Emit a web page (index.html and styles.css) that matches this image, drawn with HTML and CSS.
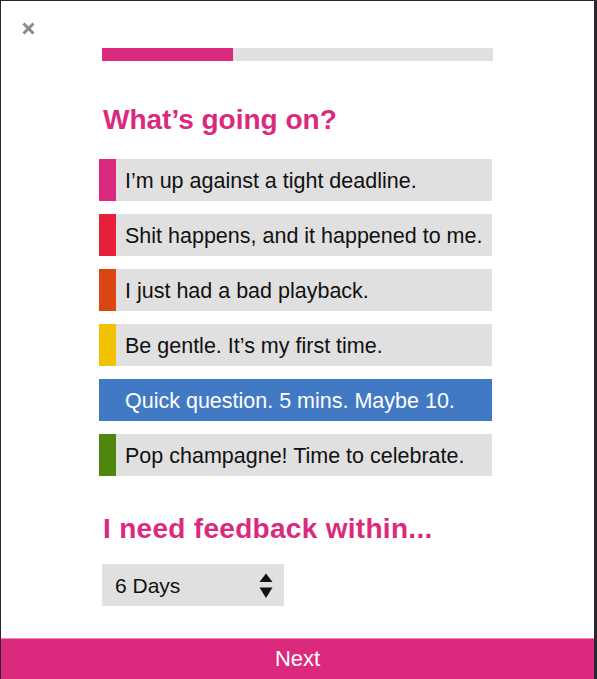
FILE: index.html
```html
<!DOCTYPE html>
<html lang="en">
<head>
<meta charset="utf-8">
<title>What's going on?</title>
<link rel="stylesheet" href="styles.css">
</head>
<body>
<div class="panel">
  <button class="close" aria-label="Close">
    <svg width="13" height="13" viewBox="0 0 13 13"><path d="M1.5 1.5 L11.5 11.5 M11.5 1.5 L1.5 11.5" stroke="#8a8a8a" stroke-width="3" fill="none"/></svg>
  </button>
  <div class="progress"><div class="progress-fill"></div></div>
  <h1 class="heading first">What’s going on?</h1>
  <ul class="options">
    <li class="option"><span class="swatch pink"></span><span class="label">I’m up against a tight deadline.</span></li>
    <li class="option"><span class="swatch red"></span><span class="label">Shit happens, and it happened to me.</span></li>
    <li class="option"><span class="swatch orange"></span><span class="label">I just had a bad playback.</span></li>
    <li class="option"><span class="swatch yellow"></span><span class="label">Be gentle. It’s my first time.</span></li>
    <li class="option selected"><span class="swatch blue"></span><span class="label">Quick question. 5 mins. Maybe 10.</span></li>
    <li class="option"><span class="swatch green"></span><span class="label">Pop champagne! Time to celebrate.</span></li>
  </ul>
  <h2 class="heading second">I need feedback within...</h2>
  <div class="select">
    <span class="select-value">6 Days</span>
    <svg class="select-arrows" width="14" height="26" viewBox="0 0 14 26"><path d="M7 0.5 L13.5 9 L0.5 9 Z" fill="#111"/><path d="M0.5 14.5 L13.5 14.5 L7 25 Z" fill="#111"/></svg>
  </div>
  <button class="next">Next</button>
</div>
</body>
</html>
```

FILE: styles.css
```css
html, body {
  margin: 0;
  padding: 0;
}
body {
  background: #2c262c;
  width: 597px;
  height: 679px;
  padding: 1px 0 0 1px;
  box-sizing: border-box;
  overflow: hidden;
  font-family: "Liberation Sans", Arial, Helvetica, sans-serif;
}
.panel {
  width: 593px;
  height: 678px;
  background: #ffffff;
  display: flex;
  flex-direction: column;
  align-items: flex-start;
}
.close {
  margin: 21px 0 0 21px;
  width: 13px;
  height: 13px;
  padding: 0;
  border: 0;
  background: none;
  display: block;
  line-height: 0;
}
.progress {
  margin: 13px 0 0 101px;
  width: 391px;
  height: 13px;
  background: #e0e0e0;
  display: flex;
}
.progress-fill {
  width: 131px;
  background: #db2a7e;
}
.heading {
  margin: 0 0 0 102px;
  font-size: 28px;
  line-height: 34px;
  font-weight: bold;
  color: #db2a7e;
}
.heading.first {
  margin-top: 42px;
}
.heading.second {
  margin-top: 36px;
  letter-spacing: 0.3px;
}
.options {
  list-style: none;
  margin: 22px 0 0 98px;
  padding: 0;
  display: flex;
  flex-direction: column;
  gap: 13px;
}
.option {
  width: 393px;
  height: 42px;
  background: #e0e0e0;
  display: flex;
  align-items: stretch;
}
.swatch {
  width: 17px;
  flex: none;
}
.pink { background: #db2a7e; }
.red { background: #e71f3a; }
.orange { background: #da4612; }
.yellow { background: #f2c100; }
.green { background: #4d870d; }
.blue { background: #4279c4; }
.label {
  padding: 2px 0 0 9px;
  font-size: 21.5px;
  line-height: 40px;
  color: #111111;
  white-space: nowrap;
}
.option.selected {
  background: #4279c4;
}
.option.selected .label {
  color: #ffffff;
}
.select {
  margin: 18px 0 0 101px;
  width: 182px;
  height: 42px;
  background: #e0e0e0;
  display: flex;
  align-items: center;
  justify-content: space-between;
  padding: 0 11px 0 13px;
  box-sizing: border-box;
}
.select-value {
  font-size: 21px;
  line-height: 42px;
  padding-top: 1px;
  color: #111111;
}
.select-arrows {
  display: block;
  margin-top: 1px;
}
.next {
  margin-top: auto;
  width: 100%;
  height: 41px;
  border: 0;
  border-top: 1px solid #e98ab6;
  background: #db2a7e;
  color: #ffffff;
  font-family: "Liberation Sans", Arial, Helvetica, sans-serif;
  font-size: 22px;
  line-height: 40px;
  padding: 0;
  text-align: center;
}
```
